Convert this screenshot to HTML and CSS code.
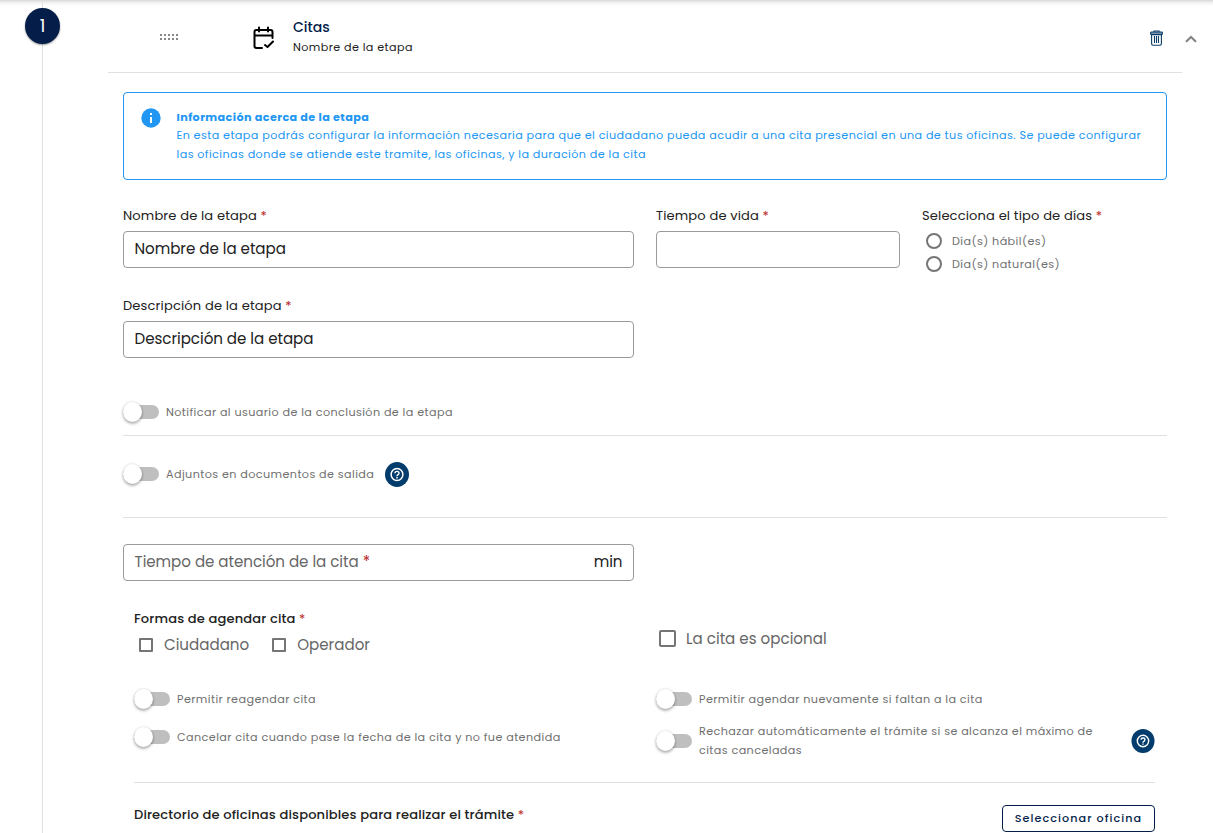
FILE: index.html
```html
<!DOCTYPE html>
<html lang="es">
<head>
<meta charset="utf-8">
<title>Citas</title>
<link rel="stylesheet" href="styles.css">
</head>
<body>
<div class="page">
  <aside class="rail"><div class="step">1</div></aside>
  <main class="stage">
    <header class="head">
      <svg class="grip" width="19" height="7" viewBox="0 0 19 7" fill="#888"><path d="M0 0h2v2H0zM4 0h2v2H4zM8 0h2v2H8zM12 0h2v2h-2zM16 0h2v2h-2zM0 4h2v2H0zM4 4h2v2H4zM8 4h2v2H8zM12 4h2v2h-2zM16 4h2v2h-2z"/></svg>
      <svg class="cal" width="22" height="24" viewBox="0 0 22 24" fill="none" stroke="#000" stroke-width="2" stroke-linecap="round" stroke-linejoin="round"><path d="M9 22H3.500Q1.500 22 1.500 20V6Q1.500 4 3.500 4H17.500Q19.500 4 19.500 6V12M1.500 9.500H19.500M6 1.500V5.500M15 1.500V5.500M12 19L14.500 21L20 15.500"/></svg>
      <div class="titles">
        <div class="title">Citas</div>
        <div class="subtitle">Nombre de la etapa</div>
      </div>
      <svg class="trash" width="13" height="16" viewBox="0 0 13 16" fill="none" stroke="#0b3d69" stroke-width="1.100"><path d="M4 2V1H9V2"/><rect x=".6" y="2" width="11.800" height="2.600" rx=".8" fill="#7795b0"/><path d="M1.600 4.500V13.500Q1.600 15.200 2.900 15.200H10.100Q11.400 15.200 11.400 13.500V4.500M4.500 6V13M6.500 6V13M8.500 6V13"/></svg>
      <svg class="chev" width="12" height="8" viewBox="0 0 12 8" fill="none" stroke="#858585" stroke-width="2.200"><path d="M1 6.700L6 1.900L11 6.700"/></svg>
    </header>

    <section class="content">
      <div class="info">
        <svg class="info-icon" width="20" height="20" viewBox="0 0 20 20"><circle cx="10" cy="10" r="9.700" fill="#2196f3"/><path d="M9 5h2v2H9zM9 9h2v6H9z" fill="#fff"/></svg>
        <div>
          <div class="info-title">Información acerca de la etapa</div>
          <div class="info-text">En esta etapa podrás configurar la información necesaria para que el ciudadano pueda acudir a una cita presencial en una de tus oficinas. Se puede configurar<br>las oficinas donde se atiende este tramite, las oficinas, y la duración de la cita</div>
        </div>
      </div>

      <div class="fields">
        <div>
          <div class="label">Nombre de la etapa <i>*</i></div>
          <div class="input">Nombre de la etapa</div>
        </div>
        <div>
          <div class="label">Tiempo de vida <i>*</i></div>
          <div class="input"></div>
        </div>
        <div>
          <div class="label">Selecciona el tipo de días <i>*</i></div>
          <div class="radio"><b></b><span>Día(s) hábil(es)</span></div>
          <div class="radio"><b></b><span>Día(s) natural(es)</span></div>
        </div>
        <div>
          <div class="label">Descripción de la etapa <i>*</i></div>
          <div class="input">Descripción de la etapa</div>
        </div>
      </div>

      <div class="row notify"><b class="switch"></b><span>Notificar al usuario de la conclusión de la etapa</span></div>
      <div class="row attach"><b class="switch"></b><span>Adjuntos en documentos de salida</span>
        <svg class="help" width="24" height="25" viewBox="0 0 24 25"><ellipse cx="12" cy="12.500" rx="12" ry="12.500" fill="#023c6c"/><circle cx="12" cy="12.500" r="5.900" fill="none" stroke="#fff" stroke-width="1.500"/><path d="M10 11.300Q10 9.400 12 9.400Q14 9.400 14 11.200Q14 12.200 12.800 12.900Q12 13.400 12 14.200M12 15.100V16.400" fill="none" stroke="#fff" stroke-width="1.400"/></svg>
      </div>

      <div class="input duration"><span class="placeholder">Tiempo de atención de la cita <i>*</i></span><span>min</span></div>

      <div class="booking">
        <div class="ways">
          <div class="label strong">Formas de agendar cita <i>*</i></div>
          <div class="checks"><b class="box"></b><span>Ciudadano</span><b class="box"></b><span>Operador</span></div>
        </div>
        <div class="optional"><b class="box big"></b><span>La cita es opcional</span></div>
        <div class="switches">
          <div class="row"><b class="switch"></b><span>Permitir reagendar cita</span></div>
          <div class="row second"><b class="switch"></b><span>Cancelar cita cuando pase la fecha de la cita y no fue atendida</span></div>
        </div>
        <div class="switches">
          <div class="row"><b class="switch"></b><span>Permitir agendar nuevamente si faltan a la cita</span></div>
          <div class="row reject"><b class="switch"></b><div class="two">Rechazar automáticamente el trámite si se alcanza el máximo de<br>citas canceladas</div>
            <svg class="help" width="24" height="24" viewBox="0 0 24 25"><ellipse cx="12" cy="12.500" rx="12" ry="12.500" fill="#023c6c"/><circle cx="12" cy="12.500" r="5.900" fill="none" stroke="#fff" stroke-width="1.500"/><path d="M10 11.300Q10 9.400 12 9.400Q14 9.400 14 11.200Q14 12.200 12.800 12.900Q12 13.400 12 14.200M12 15.100V16.400" fill="none" stroke="#fff" stroke-width="1.400"/></svg>
          </div>
        </div>
      </div>

      <div class="offices">
        <div class="label strong">Directorio de oficinas disponibles para realizar el trámite <i>*</i></div>
        <button class="select">Seleccionar oficina</button>
      </div>
    </section>
  </main>
</div>
</body>
</html>
```
FILE: styles.css
```css
* { box-sizing: border-box; }
body { margin: 0; background: #fff; font-family: Poppins, Inter, sans-serif; color: #212121; }
.page { display: flex; width: 1213px; height: 833px; overflow: hidden; white-space: nowrap; background: linear-gradient(#d9d9d9, #f4f4f4 3px, #fff 6px); }
i { font-style: normal; font-weight: 400; color: #b71c1c; }

.rail { width: 108px; padding: 8px 0 0 25px; background: linear-gradient(#e0e0e0, #e0e0e0) 42px 0 / 1px 100% no-repeat; }
.step { width: 35px; height: 36px; border-radius: 50%; background: #051e49; color: #fff; font-size: 17.500px; line-height: 37px; text-align: center; box-shadow: 0 1px 2px rgba(0,0,0,.4); }
.stage { width: 1105px; }

.head { display: flex; width: 1074px; height: 73px; border-bottom: 1px solid #e0e0e0; }
.grip { margin: 34px 0 0 52px; flex: none; }
.cal { margin: 26px 0 0 74px; flex: none; }
.titles { margin: 17px 0 0 18px; width: 857px; flex: none; }
.title { height: 20px; line-height: 20px; font-size: 14px; font-weight: 500; color: #051e49; }
.subtitle { height: 20px; line-height: 20px; font-size: 11.200px; letter-spacing: .400px; }
.trash { margin: 30px 0 0 0; flex: none; }
.chev { margin: 35px 0 0 22px; flex: none; }

.content { width: 1044px; margin: 19px 0 0 15px; }
.info { display: flex; height: 88px; padding: 15px 0 0 16px; border: 1px solid #2196f3; border-radius: 4px; color: #2196f3; font-size: 11.200px; letter-spacing: .408px; }
.info-icon { margin: 0 16px 0 .500px; flex: none; }
.info-title { height: 18px; line-height: 18px; font-weight: 700; }
.info-text { line-height: 19px; }

.fields { display: grid; grid-template-columns: 511px 244px 245px; column-gap: 22px; grid-template-rows: 90px 64px; padding-top: 24px; }
.label { height: 27px; line-height: 24px; font-size: 13.060px; letter-spacing: .01071em; }
.strong { font-weight: 500; }
.input { display: flex; height: 37px; padding: 0 10.500px; border: 1px solid #9a9a9a; border-radius: 4px; font-size: 15.100px; letter-spacing: -.040px; line-height: 34px; }
.radio { display: flex; align-items: center; height: 23px; padding-left: 4px; gap: 10px; font-size: 11.200px; letter-spacing: .410px; color: #6f6f6f; transform: translateY(-2px); }
.radio b { width: 16px; height: 16px; border: 2px solid #757575; border-radius: 50%; }
.radio span { padding-top: 2px; }

.row { display: flex; align-items: center; font-size: 11.200px; letter-spacing: .408px; color: #6f6f6f; }
.switch { position: relative; flex: none; width: 36px; height: 14px; margin-right: 7px; border-radius: 7px; background: #bfbfbf; }
.switch::before { content: ""; position: absolute; left: 0; top: -3px; width: 19px; height: 20px; border-radius: 50%; background: #fff; box-shadow: 0 2px 3px rgba(0,0,0,.28), 0 0 3px rgba(0,0,0,.16); }
.notify { height: 78px; padding-top: 30px; border-bottom: 1px solid #e0e0e0; }
.notify span { padding-top: 1px; }
.attach { height: 82px; padding-bottom: 5px; border-bottom: 1px solid #e0e0e0; }
.attach .help { margin-left: 11px; }
.duration { width: 511px; margin-top: 26px; justify-content: space-between; color: #212121; }
.placeholder { color: #666; }

.booking { display: grid; grid-template-columns: 522px 500px; grid-template-rows: 99px 102px; width: 1021px; margin-left: 11px; border-bottom: 1px solid #e0e0e0; }
.ways { padding-top: 27px; }
.ways .label { height: 26px; line-height: 22px; }
.checks, .optional { display: flex; align-items: center; font-size: 15.100px; color: #666; }
.checks { height: 21px; padding-left: 5px; }
.box { flex: none; width: 14px; height: 14px; margin-right: 11px; border: 2px solid #757575; border-radius: 1px; }
.checks span + .box { margin-left: 23px; }
.optional { height: 24px; margin-top: 45px; padding-left: 3px; }
.big { width: 17px; height: 17px; margin-right: 10px; border-radius: 2px; }
.switches { padding-top: 9px; }
.switches .row { height: 20px; }
.switches .second { margin-top: 18px; }
.switches .reject { height: 38px; margin-top: 12px; }
.reject .switch, .reject .help { margin-top: 1px; }
.two { width: 432px; padding-top: 2px; line-height: 19px; }

.offices { display: flex; justify-content: space-between; width: 1021px; margin-left: 11px; padding-top: 22px; }
.offices .label { line-height: 19px; }
.select { height: 27px; width: 153px; padding: 0; border: 1px solid #051e49; border-radius: 4px; background: #fff; color: #051e49; font: 500 11.200px/25px Poppins, Inter, sans-serif; letter-spacing: 1.050px; }
```
